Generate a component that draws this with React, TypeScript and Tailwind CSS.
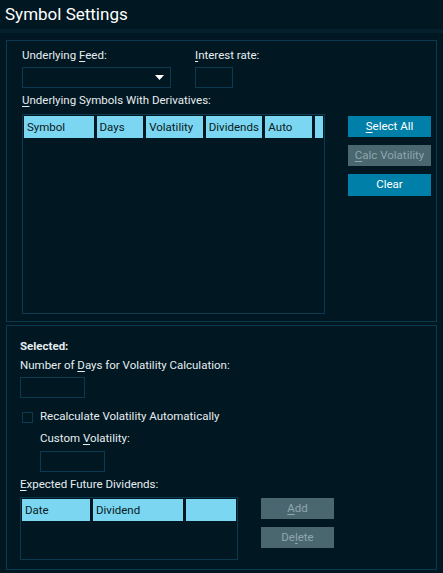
import React from "react";

const border = "border border-[#0b3a50]";

const U: React.FC<{ children: React.ReactNode }> = ({ children }) => (
  <span className="underline underline-offset-2">{children}</span>
);

const HeaderCell: React.FC<{ w: string; label?: string }> = ({ w, label }) => (
  <div className={`${w} h-[22px] leading-[22px] bg-[#7ad6f1] text-[#0a1a22] pl-[3px]`}>
    {label}
  </div>
);

const Btn: React.FC<{
  children: React.ReactNode;
  disabled?: boolean;
  className?: string;
}> = ({ children, disabled, className }) => (
  <button
    className={`block text-center text-[11.5px] ${
      disabled ? "bg-[#4a6770] text-[#8fa6ad]" : "bg-[#0080a8] text-white"
    } ${className ?? ""}`}
  >
    {children}
  </button>
);

export default function App() {
  return (
    <div
      className="w-[443px] h-[573px] bg-[#011722] text-[#e6eef0] text-[11.5px] overflow-hidden"
      style={{ fontFamily: "Roboto, 'Liberation Sans', sans-serif" }}
    >
      {/* title */}
      <div className="h-[29px] pl-[5px] leading-[29px] text-[17px] text-white">
        Symbol Settings
      </div>
      <div className="h-[4px] bg-[#04202c]" />

      <div className="px-[6px] pt-[7px] flex flex-col gap-[3px]">
        {/* top panel */}
        <div className={`${border} h-[282px] pl-[15px] pt-[6px]`}>
          <div className="flex">
            <div className="w-[173px]">
              <div className="leading-[16px]">
                Underlying <U>F</U>eed:
              </div>
              <div className={`${border} mt-[4px] w-[149px] h-[21px] flex items-center justify-end pr-[6px]`}>
                <svg width="9" height="5" viewBox="0 0 9 5">
                  <path d="M0 0H9L4.5 5Z" fill="#ffffff" />
                </svg>
              </div>
            </div>
            <div>
              <div className="leading-[16px]">
                <U>I</U>nterest rate:
              </div>
              <div className={`${border} mt-[4px] w-[38px] h-[21px]`} />
            </div>
          </div>
          <div className="leading-[16px] mt-[4px]">
            <U>U</U>nderlying Symbols With Derivatives:
          </div>
          <div className="flex mt-[6px]">
            <div className={`${border} w-[303px] h-[200px] p-[1px]`}>
              <div className="flex gap-[3px]">
                <HeaderCell w="w-[70px]" label="Symbol" />
                <HeaderCell w="w-[47px]" label="Days" />
                <HeaderCell w="w-[57px]" label="Volatility" />
                <HeaderCell w="w-[57px]" label="Dividends" />
                <HeaderCell w="w-[47px]" label="Auto" />
                <HeaderCell w="w-[8px]" />
              </div>
            </div>
            <div className="ml-[23px] pt-[2px] flex flex-col gap-[8px]">
              <Btn className="w-[83px] h-[21px]">
                <U>S</U>elect All
              </Btn>
              <Btn disabled className="w-[83px] h-[21px]">
                <U>C</U>alc Volatility
              </Btn>
              <Btn className="w-[83px] h-[22px]">Clear</Btn>
            </div>
          </div>
        </div>

        {/* bottom panel */}
        <div className={`${border} h-[245px] pl-[13px] pt-[12px]`}>
          <div className="leading-[16px] font-bold">Selected:</div>
          <div className="leading-[16px] mt-[3px]">
            Number of <U>D</U>ays for Volatility Calculation:
          </div>
          <div className={`${border} mt-[4px] w-[65px] h-[21px]`} />
          <div className="flex items-center h-[16px] mt-[11px] ml-[2px]">
            <div className={`${border} w-[11px] h-[11px]`} />
            <span className="ml-[7px]">Recalculate Volatility Automatically</span>
          </div>
          <div className="ml-[20px]">
            <div className="leading-[16px] mt-[5px]">
              Custom <U>V</U>olatility:
            </div>
            <div className={`${border} mt-[5px] w-[65px] h-[21px]`} />
          </div>
          <div className="leading-[16px] mt-[4px]">
            <U>E</U>xpected Future Dividends:
          </div>
          <div className="flex mt-[5px]">
            <div className={`${border} w-[218px] h-[63px] p-[1px]`}>
              <div className="flex gap-[3px]">
                <HeaderCell w="w-[68px]" label="Date" />
                <HeaderCell w="w-[90px]" label="Dividend" />
                <HeaderCell w="w-[50px]" />
              </div>
            </div>
            <div className="ml-[23px] pt-[1px] flex flex-col gap-[8px]">
              <Btn disabled className="w-[73px] h-[21px]">
                <U>A</U>dd
              </Btn>
              <Btn disabled className="w-[73px] h-[21px]">
                De<U>l</U>ete
              </Btn>
            </div>
          </div>
        </div>
      </div>
    </div>
  );
}
